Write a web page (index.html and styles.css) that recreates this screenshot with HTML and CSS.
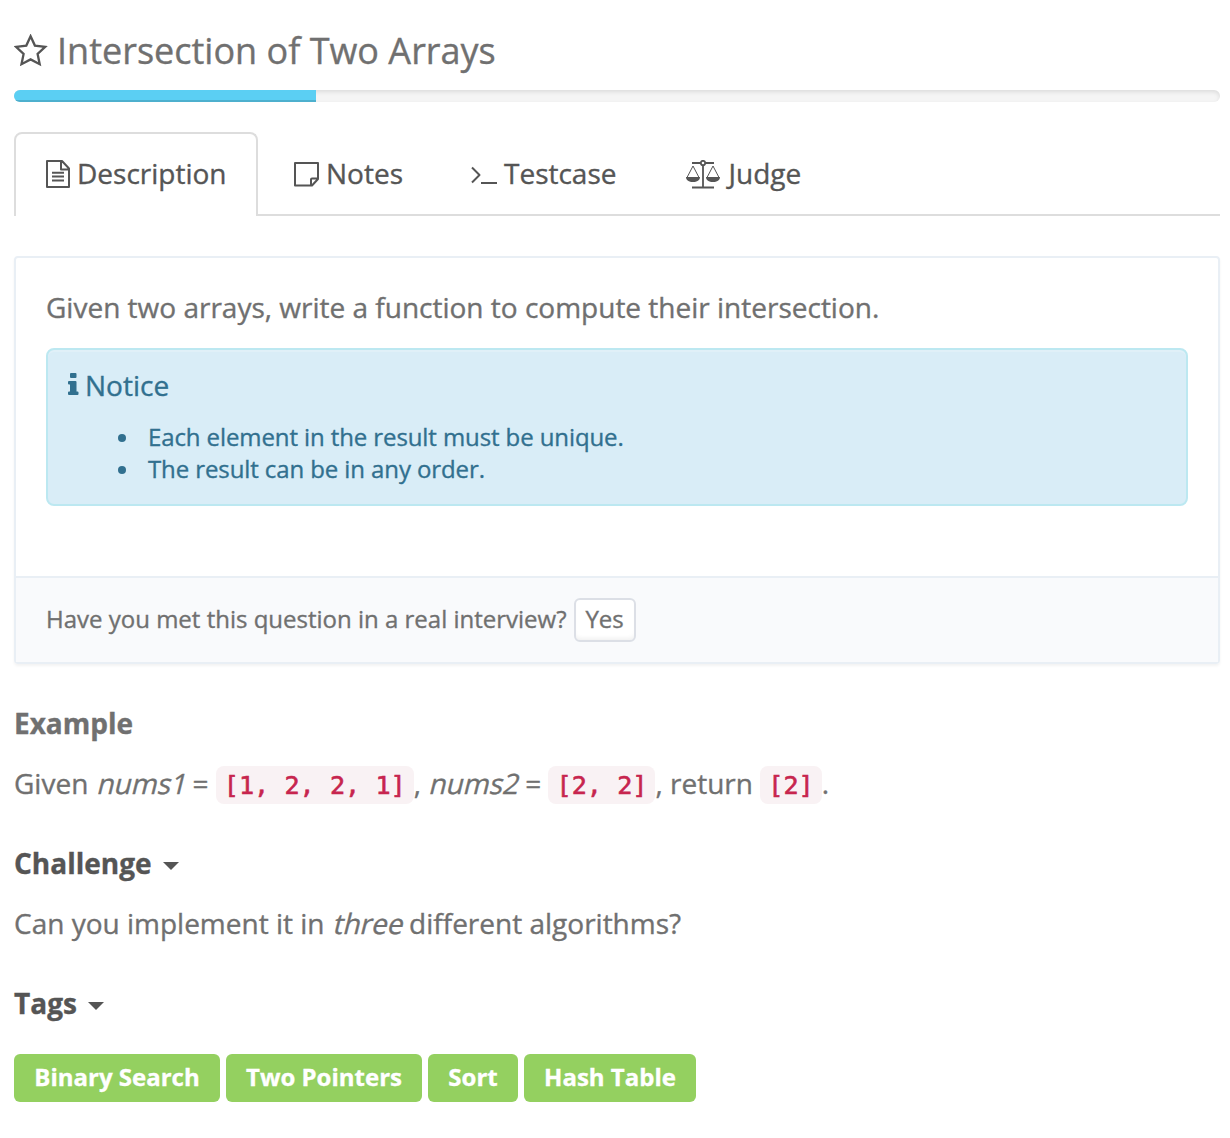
FILE: index.html
```html
<!DOCTYPE html>
<html lang="en">
<head>
<meta charset="utf-8">
<title>Intersection of Two Arrays</title>
<link rel="stylesheet" href="styles.css">
</head>
<body>
<main class="page">
  <h1 class="title">
    <svg class="star" width="34" height="34" viewBox="0 0 34 34"><path d="M16.6 2.2 20.9 11.6 31.2 12.9 23.6 19.9 25.7 30.2 16.6 25.4 7.5 30.2 9.6 19.9 2 12.9 12.3 11.6Z"/></svg>
    <span>Intersection of Two Arrays</span>
  </h1>
  <div class="progress"><div class="progress-bar"></div></div>

  <nav class="tabs">
    <a class="tab active">
      <svg class="icon" width="24" height="28" viewBox="0 0 24 28"><path d="M1 1H16L23 8.500V27H1ZM15 1V9.500H23M6 16.500H18M6 20.500H18M6 12.800H18"/></svg>
      <span>Description</span>
    </a>
    <a class="tab">
      <svg class="icon" width="25" height="28" viewBox="0 0 25 28"><path d="M1 3H24V19L18 25.500H1ZM17 25.500V19.500Q17 18.500 18 18.500H24"/></svg>
      <span>Notes</span>
    </a>
    <a class="tab">
      <svg class="icon" width="26" height="28" viewBox="0 0 26 28"><path d="M1 7.500 8.500 15 1 22.500M10 23H26"/></svg>
      <span>Testcase</span>
    </a>
    <a class="tab judge">
      <svg class="icon" width="34" height="29" viewBox="0 0 34 29"><g class="thin"><path d="M6 3H14.500M19.500 3H28M17 5V27M6 27.500H28"/><circle cx="17" cy="3" r="2.200"/></g><path class="hair" d="M1 17.500 7 6 13 17.500M21 17.500 27 6 33 17.500"/><path class="solid" d="M0 17H14C14 20.500 11 22 7 22S0 20.500 0 17ZM20 17H34C34 20.500 31 22 27 22S20 20.500 20 17Z"/></svg>
      <span>Judge</span>
    </a>
  </nav>

  <section class="card">
    <div class="card-body">
      <p class="text">Given two arrays, write a function to compute their intersection.</p>
      <div class="notice">
        <div class="notice-title">
          <svg width="11" height="24" viewBox="0 0 11 24"><path d="M3 0H7.500Q8.500 0 8.500 1V4Q8.500 5 7.500 5H3Q2 5 2 4V1Q2 0 3 0ZM1 8H7.500Q8.500 8 8.500 9V18.500H9.500Q10.500 18.500 10.500 19.500V21Q10.500 22 9.500 22H1Q0 22 0 21V19.500Q0 18.500 1 18.500H2V11.500H1Q0 11.500 0 10.500V9Q0 8 1 8Z"/></svg>
          <span>Notice</span>
        </div>
        <ul class="notice-list">
          <li>Each element in the result must be unique.</li>
          <li>The result can be in any order.</li>
        </ul>
      </div>
    </div>
    <div class="card-footer">
      <span>Have you met this question in a real interview?</span>
      <button class="yes">Yes</button>
    </div>
  </section>

  <section class="block first">
    <h2 class="heading muted">Example</h2>
    <p class="text">Given <em>nums1</em> = <code>[1, 2, 2, 1]</code>, <em>nums2</em> = <code>[2, 2]</code>, return <code>[2]</code>.</p>
  </section>
  <section class="block">
    <h2 class="heading">Challenge <i class="caret"></i></h2>
    <p class="text">Can you implement it in <em>three</em> different algorithms?</p>
  </section>
  <section class="block">
    <h2 class="heading">Tags <i class="caret"></i></h2>
    <div class="tags">
      <a class="tag w1">Binary Search</a>
      <a class="tag w2">Two Pointers</a>
      <a class="tag w3">Sort</a>
      <a class="tag w4">Hash Table</a>
    </div>
  </section>
</main>
</body>
</html>
```
FILE: styles.css
```css
* { box-sizing: border-box; }
body {
  margin: 0;
  background: #fff;
  color: #707070;
  font: 28px/40px "Open Sans", "Noto Sans", sans-serif;
  -webkit-text-stroke: .35px currentColor;
}
.page { padding: 26px 10px 0 14px; }
.title {
  display: flex;
  align-items: center;
  gap: 9px;
  height: 50px;
  margin: 0 0 14px;
  font-size: 36px;
  font-weight: 400;
  line-height: 50px;
}
.star { fill: none; stroke: #555; stroke-width: 2.3; flex: none; }
.progress {
  height: 12px;
  overflow: hidden;
  border-radius: 6px;
  background: #f5f5f5;
  box-shadow: inset 0 2px 4px rgba(0, 0, 0, .1);
}
.progress-bar {
  width: 302px;
  height: 12px;
  background: #5bcff3;
  box-shadow: inset 0 -2px 0 rgba(0, 0, 0, .15);
}
.tabs {
  display: flex;
  gap: 4px;
  height: 84px;
  margin-top: 30px;
  border-bottom: 2px solid #ddd;
}
.tab {
  display: flex;
  align-items: center;
  gap: 7px;
  height: 84px;
  padding: 0 30px 2px;
  border: 2px solid transparent;
  border-bottom: 0;
  color: #555;
}
.tab span { margin-top: -2px; }
.tab.active {
  width: 244px;
  border-color: #ddd;
  border-radius: 8px 8px 0 0;
  background: #fff;
}
.tab.judge { gap: 9px; margin-left: 1px; }
.icon { flex: none; fill: none; stroke: #555; stroke-width: 2; stroke-linejoin: round; }
.thin { stroke-width: 1.8; }
.hair { stroke-width: 1; }
.solid { fill: #555; stroke: none; }
.card {
  height: 408px;
  margin-top: 40px;
  border: 2px solid #e9eff5;
  border-radius: 4px;
  box-shadow: 0 2px 3px rgba(0, 0, 0, .05);
}
.card-body { height: 318px; padding: 29px 30px 0; }
.text { margin: 0; white-space: nowrap; }
.notice {
  height: 158px;
  margin-top: 21px;
  padding: 15px 20px 0;
  border: 2px solid #bce8f1;
  border-radius: 8px;
  background: #d9edf7;
  box-shadow: inset 0 2px 0 rgba(255, 255, 255, .2);
  color: #31708f;
}
.notice-title { display: flex; align-items: center; gap: 6px; height: 40px; }
.notice-title svg { fill: #31708f; }
.notice-list {
  margin: 16px 0 0;
  padding: 0 0 0 50px;
  font-size: 24px;
  line-height: 32px;
  letter-spacing: -.1px;
  list-style: none;
}
.notice-list li { display: flex; align-items: center; gap: 22px; height: 32px; }
.notice-list li::before {
  content: "";
  width: 8px;
  height: 8px;
  margin-top: 2px;
  border-radius: 50%;
  background: #31708f;
}
.card-footer {
  display: flex;
  align-items: center;
  gap: 7px;
  height: 86px;
  padding: 0 30px;
  border-top: 2px solid #e9eff5;
  background: #f9fafc;
  font-size: 24px;
}
.card-footer span { margin-top: -2px; }
.yes {
  width: 62px;
  height: 44px;
  padding: 0 0 2px;
  border: 2px solid #dcdfe6;
  border-radius: 6px;
  background: #fff;
  box-shadow: inset 0 -4px 4px -2px rgba(0, 0, 0, .06);
  color: #707070;
  font: 24px/38px "Open Sans", sans-serif;
}
.block { margin-top: 40px; }
.block.first { margin-top: 39px; }
.heading {
  margin: 0 0 20px;
  color: #555;
  font-size: 28px;
  font-weight: 700;
  line-height: 40px;
}
.muted { color: #707070; }
em {
  display: inline-block;
  font-style: normal;
  transform: skewX(-14deg);
  transform-origin: 0 77%;
}
.caret {
  display: inline-block;
  margin-left: 4px;
  border: 8px solid transparent;
  border-top-color: #555;
  border-bottom: 0;
  vertical-align: 4px;
}
code {
  padding: 5px 8px 4px;
  border-radius: 8px;
  background: #f9f2f4;
  color: #c7254e;
  font: 25.2px/30px "DejaVu Sans Mono", monospace;
  -webkit-text-stroke: .6px currentColor;
}
.tags { display: flex; gap: 6px; margin-top: 31px; }
.tag {
  height: 48px;
  border-radius: 6px;
  background: #94d060;
  color: #fff;
  font-size: 24px;
  font-weight: 700;
  line-height: 46px;
  text-align: center;
  white-space: nowrap;
}
.w1 { width: 206px; }
.w2 { width: 196px; }
.w3 { width: 90px; }
.w4 { width: 172px; }
```
